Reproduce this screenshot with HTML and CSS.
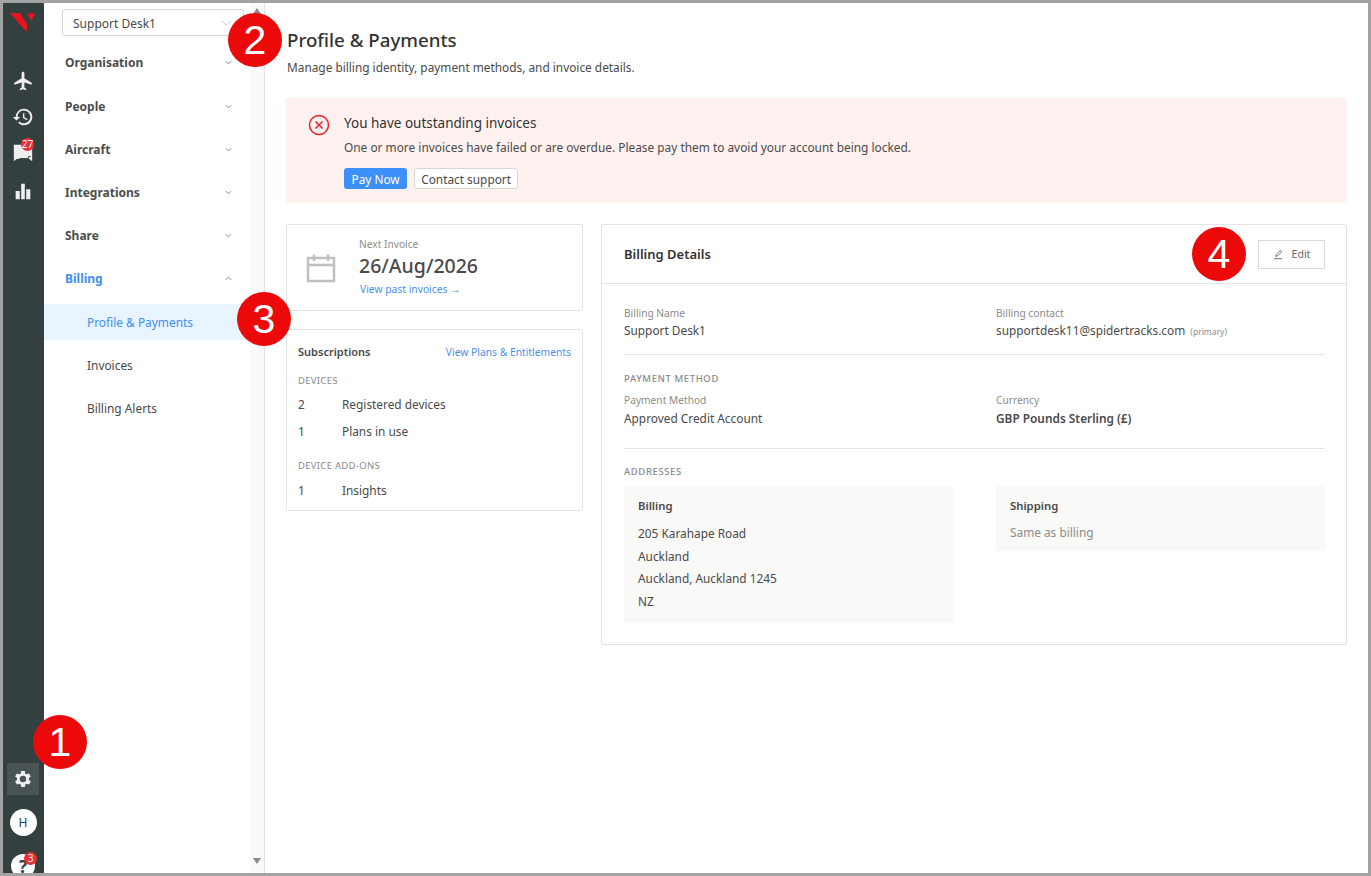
FILE: index.html
```html
<!DOCTYPE html>
<html lang="en">
<head>
	<meta charset="UTF-8">
	<title>Profile &amp; Payments</title>
	<link rel="stylesheet" href="styles.css">
</head>
<body>
	<div class="frame">
		<nav class="rail">
			<svg class="logo" viewBox="0 0 26 20"><path fill="#e8131b" d="M0 0h10l7.500 12-1 7zM17 1l8-1-3.500 8z"/></svg>
			<div class="rail-icons">
				<svg class="rail-icon" viewBox="0 0 24 24"><path d="M21 16v-2l-8-5V3.500a1.500 1.500 0 0 0-3 0V9l-8 5v2l8-2.500V19l-2 1.500V22l3.500-1 3.500 1v-1.500L13 19v-5.500z" transform="translate(.5 0)"/></svg>
				<svg class="rail-icon" viewBox="0 0 24 24"><path d="M13 3a9 9 0 0 0-9 9H1l3.900 3.900L9 12H6a7 7 0 1 1 2.100 4.900l-1.400 1.400A9 9 0 1 0 13 3zm-1 5v5l4.300 2.500.7-1.200-3.500-2.100V8z"/></svg>
				<div class="rail-chat">
					<svg class="rail-icon" viewBox="0 0 24 24"><path d="M2 3h20v18l-3-2.500H5L2 21z"/><path class="chat-fold" d="M8 18h10v-2h2.500"/></svg>
					<span class="badge">27</span>
				</div>
				<svg class="rail-icon bars" viewBox="0 0 24 24"><path d="M4 12h4.500v9H4zM10 4h4v17h-4zM15.500 10H20v11h-4.500z"/></svg>
			</div>
			<div class="rail-bottom">
				<div class="rail-gear">
					<svg class="rail-icon" viewBox="0 0 24 24"><path d="M19.400 13a7.500 7.500 0 0 0 0-2l2.100-1.600-2-3.500-2.500 1a7.500 7.500 0 0 0-1.700-1L15 3.200h-4l-.4 2.700a7.500 7.500 0 0 0-1.700 1l-2.500-1-2 3.500L6.500 11a7.500 7.500 0 0 0 0 2l-2.100 1.600 2 3.500 2.500-1a7.500 7.500 0 0 0 1.700 1l.4 2.700h4l.4-2.700a7.500 7.500 0 0 0 1.700-1l2.500 1 2-3.500zM13 15.500a3.500 3.500 0 1 1 0-7 3.500 3.500 0 0 1 0 7z" transform="translate(-1 0)"/></svg>
				</div>
				<div class="avatar">H</div>
				<div class="help">
					<span class="help-mark">?</span>
					<span class="badge">3</span>
				</div>
			</div>
		</nav>

		<aside class="sidebar">
			<div class="sidebar-inner">
				<div class="org-select">
					<span>Support Desk1</span>
					<svg class="select-chevron" viewBox="0 0 12 8"><path d="M1 1l5 5 5-5"/></svg>
				</div>
				<div class="menu">
					<div class="menu-row"><span>Organisation</span><svg class="chevron" viewBox="0 0 8 5"><path d="M1 1l3 3 3-3"/></svg></div>
					<div class="menu-row"><span>People</span><svg class="chevron" viewBox="0 0 8 5"><path d="M1 1l3 3 3-3"/></svg></div>
					<div class="menu-row"><span>Aircraft</span><svg class="chevron" viewBox="0 0 8 5"><path d="M1 1l3 3 3-3"/></svg></div>
					<div class="menu-row"><span>Integrations</span><svg class="chevron" viewBox="0 0 8 5"><path d="M1 1l3 3 3-3"/></svg></div>
					<div class="menu-row"><span>Share</span><svg class="chevron" viewBox="0 0 8 5"><path d="M1 1l3 3 3-3"/></svg></div>
					<div class="menu-row open"><span>Billing</span><svg class="chevron" viewBox="0 0 8 5"><path d="M1 4l3-3 3 3"/></svg></div>
					<div class="sub-row active">Profile &amp; Payments</div>
					<div class="sub-row">Invoices</div>
					<div class="sub-row">Billing Alerts</div>
				</div>
			</div>
			<div class="scrollbar">
				<span class="arrow-up"></span>
				<span class="arrow-down"></span>
			</div>
		</aside>

		<main class="main">
			<h1>Profile &amp; Payments</h1>
			<p class="subtitle">Manage billing identity, payment methods, and invoice details.</p>

			<section class="alert">
				<svg class="alert-icon" viewBox="0 0 22 22"><circle cx="11" cy="11" r="9.500"/><path d="M7.500 7.500l7 7M14.500 7.500l-7 7"/></svg>
				<div>
					<div class="alert-title">You have outstanding invoices</div>
					<div class="alert-text">One or more invoices have failed or are overdue. Please pay them to avoid your account being locked.</div>
					<div class="alert-actions">
						<button class="btn-primary">Pay Now</button>
						<button class="btn-default">Contact support</button>
					</div>
				</div>
			</section>

			<div class="columns">
				<div class="left-col">
					<section class="card invoice-card">
						<svg class="calendar" viewBox="0 0 30 30"><path d="M2 5h26v23H2zM2 12h26M8 1.500V8M22 1.500V8"/></svg>
						<div class="invoice-info">
							<div class="invoice-label">Next Invoice</div>
							<div class="invoice-date">26/Aug/2026</div>
							<a class="link invoice-link">View past invoices →</a>
						</div>
					</section>
					<section class="card subs-card">
						<div class="subs-head">
							<span class="subs-title">Subscriptions</span>
							<a class="link">View Plans &amp; Entitlements</a>
						</div>
						<div class="section-label">DEVICES</div>
						<div class="subs-row"><span class="subs-num">2</span><span>Registered devices</span></div>
						<div class="subs-row"><span class="subs-num">1</span><span>Plans in use</span></div>
						<div class="section-label addons">DEVICE ADD-ONS</div>
						<div class="subs-row"><span class="subs-num">1</span><span>Insights</span></div>
					</section>
				</div>

				<section class="card billing-card">
					<header class="billing-head">
						<span class="billing-title">Billing Details</span>
						<button class="btn-edit">
							<svg class="edit-icon" viewBox="0 0 12 12"><path d="M3 8l.5-2L8 1.500 9.500 3 5 7.500zM1 10.500h9"/></svg>
							Edit
						</button>
					</header>
					<div class="billing-body">
						<div class="field-grid first">
							<div>
								<div class="field-label">Billing Name</div>
								<div class="field-value">Support Desk1</div>
							</div>
							<div>
								<div class="field-label">Billing contact</div>
								<div class="field-value">supportdesk11@spidertracks.com <small>(primary)</small></div>
							</div>
						</div>
						<hr>
						<div class="section-label">PAYMENT METHOD</div>
						<div class="field-grid">
							<div>
								<div class="field-label">Payment Method</div>
								<div class="field-value">Approved Credit Account</div>
							</div>
							<div>
								<div class="field-label">Currency</div>
								<div class="field-value strong">GBP Pounds Sterling (£)</div>
							</div>
						</div>
						<hr class="second">
						<div class="section-label">ADDRESSES</div>
						<div class="address-grid">
							<div class="address">
								<div class="address-title">Billing</div>
								<div class="address-line">205 Karahape Road</div>
								<div class="address-line">Auckland</div>
								<div class="address-line">Auckland, Auckland 1245</div>
								<div class="address-line">NZ</div>
							</div>
							<div class="address shipping">
								<div class="address-title">Shipping</div>
								<div class="address-muted">Same as billing</div>
							</div>
						</div>
					</div>
				</section>
			</div>
		</main>

		<span class="callout c1">1</span>
		<span class="callout c2">2</span>
		<span class="callout c3">3</span>
		<span class="callout c4">4</span>
	</div>
</body>
</html>
```

FILE: styles.css
```css
html, body {
	margin: 0;
	padding: 0;
	height: 100%;
	overflow: hidden;
	background: white;
	font-family: "Noto Sans", "Open Sans", sans-serif;
	color: #4a4a4a;
}
.frame {
	position: relative;
	display: flex;
	box-sizing: border-box;
	height: 876px;
	border: 3px solid #a3a3a3;
	overflow: hidden;
}

/* ----- icon rail ----- */
.rail {
	display: flex;
	flex-direction: column;
	align-items: center;
	box-sizing: border-box;
	width: 41px;
	padding-right: 1px;
	flex-shrink: 0;
	background: #343f40;
}
.logo {
	width: 26px;
	height: 20px;
	margin-top: 10px;
}
.rail-icons {
	display: flex;
	flex-direction: column;
	align-items: center;
	gap: 14px;
	margin-top: 37px;
}
.rail-icon {
	display: block;
	width: 22px;
	height: 22px;
	fill: #eeeeee;
}
.rail-icon.bars {
	margin-top: 2px;
}
.chat-fold {
	fill: none;
	stroke: #343f40;
	stroke-width: 1;
}
.rail-chat {
	position: relative;
}
.badge {
	position: absolute;
	top: -4px;
	right: 0;
	min-width: 13px;
	height: 13px;
	border-radius: 7px;
	background: #ee2e34;
	color: white;
	font-size: 10px;
	line-height: 13px;
	text-align: center;
}
.rail-bottom {
	display: flex;
	flex-direction: column;
	align-items: center;
	margin-top: auto;
}
.rail-gear {
	display: flex;
	align-items: center;
	justify-content: center;
	width: 32px;
	height: 32px;
	background: #4a5455;
}
.avatar {
	width: 27px;
	height: 27px;
	margin-top: 14px;
	border-radius: 50%;
	background: white;
	color: #1d3f66;
	font-size: 12px;
	line-height: 27px;
	text-align: center;
}
.help {
	position: relative;
	width: 24px;
	height: 24px;
	margin-top: 18px;
	margin-bottom: -5px;
	border-radius: 50%;
	background: white;
	text-align: center;
}
.help-mark {
	display: block;
	color: #343f40;
	font-size: 17px;
	font-weight: 700;
	line-height: 26px;
}
.help .badge {
	top: -2px;
	right: -2px;
}

/* ----- settings sidebar ----- */
.sidebar {
	display: flex;
	width: 221px;
	flex-shrink: 0;
	box-sizing: border-box;
	border-right: 1px solid #e2e2e2;
}
.sidebar-inner {
	flex: 1;
	min-width: 0;
}
.org-select {
	display: flex;
	align-items: center;
	justify-content: space-between;
	box-sizing: border-box;
	width: 182px;
	height: 27px;
	margin: 6px 0 0 18px;
	padding: 1px 10px 0;
	border: 1px solid #d4d4d4;
	border-radius: 3px;
	font-size: 12px;
}
.select-chevron {
	width: 11px;
	height: 7px;
	margin-right: 1px;
	fill: none;
	stroke: #bdbdbd;
	stroke-width: 1;
}
.menu {
	margin-top: 5px;
}
.menu-row {
	display: flex;
	align-items: center;
	justify-content: space-between;
	box-sizing: border-box;
	height: 43px;
	padding: 0 18px 0 21px;
	font-size: 12px;
	font-weight: 700;
	color: #4d4d4d;
}
.menu-row:first-child {
	height: 44px;
	padding-bottom: 2px;
}
.menu-row.open {
	color: #3d8ff5;
}
.chevron {
	width: 7px;
	height: 5px;
	fill: none;
	stroke: #777777;
	stroke-width: 1;
}
.sub-row {
	display: flex;
	align-items: center;
	height: 36px;
	margin-bottom: 7px;
	padding-left: 43px;
	font-size: 11.900px;
}
.sub-row.active {
	margin-top: 4px;
	background: #e8f4ff;
	color: #3d8ff5;
}
.scrollbar {
	position: relative;
	width: 14px;
	flex-shrink: 0;
	background: #fafafa;
}
.arrow-up, .arrow-down {
	position: absolute;
	left: 3px;
	border-left: 4px solid transparent;
	border-right: 4px solid transparent;
}
.arrow-up {
	top: 5px;
	border-bottom: 6px solid #8a8a8a;
}
.arrow-down {
	bottom: 9px;
	border-top: 6px solid #8a8a8a;
}

/* ----- main content ----- */
.main {
	flex: 1;
	min-width: 0;
	padding: 22px 21px 0 21px;
}
h1 {
	margin: 0 0 0 1px;
	font-size: 18.700px;
	font-weight: 500;
	line-height: 30px;
	color: #333333;
}
.subtitle {
	margin: 3px 0 0 1px;
	font-size: 11.850px;
	line-height: 18px;
}
.alert {
	display: flex;
	box-sizing: border-box;
	height: 105px;
	margin-top: 22px;
	padding: 15px 21px;
	gap: 14px;
	background: #fff1f0;
}
.alert-icon {
	width: 22px;
	height: 22px;
	margin: 1px 0 0 1px;
	flex-shrink: 0;
	fill: none;
	stroke: #e8232b;
	stroke-width: 1.500;
}
.alert-title {
	font-size: 13.500px;
	line-height: 20px;
	color: #333333;
}
.alert-text {
	margin-top: 4px;
	font-size: 11.880px;
	line-height: 20px;
}
.alert-actions {
	display: flex;
	gap: 7px;
	margin-top: 11px;
}
.alert-actions button {
	height: 21px;
	border-radius: 3px;
	font-family: inherit;
	font-size: 11.850px;
}
.btn-primary {
	padding: 0 7.500px;
	border: 0;
	background: #3d8ff9;
	color: white;
}
.btn-default {
	padding: 0 6px;
	border: 1px solid #d6d6d6;
	background: white;
	color: #4a4a4a;
}
.columns {
	display: flex;
	align-items: flex-start;
	gap: 18px;
	margin-top: 21px;
}
.left-col {
	display: flex;
	flex-direction: column;
	gap: 18px;
	width: 297px;
	flex-shrink: 0;
}
.card {
	box-sizing: border-box;
	border: 1px solid #e4e4e4;
	border-radius: 2px;
	background: white;
}
.invoice-card {
	display: flex;
	align-items: center;
	gap: 23px;
	height: 87px;
	padding-left: 19px;
}
.calendar {
	width: 30px;
	height: 30px;
	flex-shrink: 0;
	fill: none;
	stroke: #c0c0c0;
	stroke-width: 2.500;
}
.invoice-info {
	align-self: flex-start;
	margin-top: 12px;
}
.invoice-label {
	font-size: 10.200px;
	line-height: 14px;
	color: #8c8c8c;
}
.invoice-date {
	margin-top: 2px;
	font-size: 19.500px;
	font-weight: 500;
	line-height: 26px;
}
.invoice-link {
	display: block;
	margin-top: 3px;
	padding-left: 1px;
}
.link {
	font-size: 10.300px;
	line-height: 14px;
	color: #4a90f5;
}
.subs-card {
	height: 182px;
	padding: 14px 11px 0;
}
.subs-head {
	display: flex;
	align-items: center;
	justify-content: space-between;
	height: 16px;
}
.subs-title {
	margin-bottom: 2px;
	font-size: 11px;
	font-weight: 600;
}
.section-label {
	font-size: 9.500px;
	line-height: 14px;
	letter-spacing: .3px;
	color: #8a8a8a;
}
.subs-card .section-label {
	margin-top: 14px;
}
.subs-card .section-label.addons {
	margin-top: 17px;
}
.subs-row {
	display: flex;
	margin-top: 6px;
	font-size: 11.850px;
	line-height: 21px;
}
.addons + .subs-row {
	margin-top: 7px;
}
.subs-num {
	width: 44px;
}
.billing-card {
	flex: 1;
	min-width: 0;
	height: 421px;
}
.billing-head {
	display: flex;
	align-items: center;
	justify-content: space-between;
	box-sizing: border-box;
	height: 59px;
	padding: 0 21px 0 22px;
	border-bottom: 1px solid #e4e4e4;
}
.billing-title {
	font-size: 13px;
	font-weight: 600;
	color: #333333;
}
.btn-edit {
	display: flex;
	align-items: center;
	justify-content: center;
	gap: 8px;
	width: 67px;
	height: 29px;
	padding: 0;
	border: 1px solid #d9d9d9;
	background: white;
	color: #666666;
	font-family: inherit;
	font-size: 10.500px;
}
.edit-icon {
	width: 11px;
	height: 11px;
	fill: none;
	stroke: #555555;
	stroke-width: .9;
}
.billing-body {
	padding: 22px 21px 0 22px;
}
.billing-body .section-label {
	letter-spacing: .6px;
	font-weight: 500;
}
.field-grid, .address-grid {
	display: grid;
	grid-template-columns: 329px 329px;
	column-gap: 43px;
}
.field-label {
	font-size: 10.200px;
	line-height: 14px;
	color: #8c8c8c;
}
.field-value {
	margin-top: 2px;
	font-size: 11.850px;
	line-height: 18px;
}
.field-grid.first .field-value {
	margin-top: 1px;
}
.field-value small {
	margin-left: 2px;
	font-size: 8.500px;
	color: #8c8c8c;
}
.field-value.strong {
	font-weight: 600;
}
hr {
	height: 1px;
	margin: 13px 0 17px;
	border: 0;
	background: #e4e4e4;
}
hr.second {
	margin: 21px 0 16px;
}
.section-label + .field-grid {
	margin-top: 7px;
}
.address-grid {
	align-items: start;
	margin-top: 7px;
}
.address {
	box-sizing: border-box;
	height: 137px;
	padding: 12px 14px 0;
	border-radius: 2px;
	background: #f9f9f7;
}
.address.shipping {
	height: 65px;
}
.address-title {
	margin-bottom: 8px;
	font-size: 11.300px;
	font-weight: 600;
	line-height: 16px;
}
.address-line {
	font-size: 11.850px;
	line-height: 22.600px;
}
.address-muted {
	font-size: 11.850px;
	line-height: 20px;
	color: #8c8c8c;
}

/* ----- numbered callouts laid over the page ----- */
.callout {
	position: absolute;
	width: 54px;
	height: 54px;
	border-radius: 50%;
	background: #ec0909;
	color: white;
	font-family: "Liberation Sans", sans-serif;
	font-size: 41px;
	line-height: 54px;
	text-align: center;
}
.c1 { left: 30px; top: 712px; }
.c2 { left: 225px; top: 10px; }
.c3 { left: 234px; top: 289px; }
.c4 { left: 1189px; top: 224px; }
```
